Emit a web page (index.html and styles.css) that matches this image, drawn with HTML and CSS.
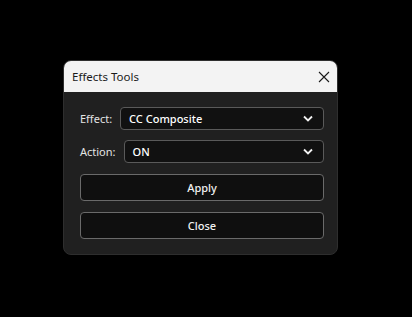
FILE: index.html
```html
<!DOCTYPE html>
<html lang="en">
<head>
    <meta charset="UTF-8">
    <meta name="viewport" content="width=device-width, initial-scale=1.0">
    <title>Effects Tools</title>
    <link rel="stylesheet" href="styles.css">
</head>
<body>
    <div class="dialog">
        <div class="titlebar">
            <span class="title">Effects Tools</span>
            <svg class="close-x" width="12" height="12" viewBox="0 0 12 12">
                <path d="M1 1 L11 11 M11 1 L1 11" stroke="#1a1a1a" stroke-width="1.1" fill="none"/>
            </svg>
        </div>
        <div class="content">
            <div class="row">
                <span class="label">Effect:</span>
                <div class="dropdown">
                    <span>CC Composite</span>
                    <svg class="chevron" width="10" height="7" viewBox="0 0 10 7">
                        <path d="M1 1.5 L5 5.5 L9 1.5" stroke="#f0f0f0" stroke-width="1.8" fill="none"/>
                    </svg>
                </div>
            </div>
            <div class="row">
                <span class="label">Action:</span>
                <div class="dropdown">
                    <span>ON</span>
                    <svg class="chevron" width="10" height="7" viewBox="0 0 10 7">
                        <path d="M1 1.5 L5 5.5 L9 1.5" stroke="#f0f0f0" stroke-width="1.8" fill="none"/>
                    </svg>
                </div>
            </div>
            <button class="btn">Apply</button>
            <button class="btn">Close</button>
        </div>
    </div>
</body>
</html>
```

FILE: styles.css
```css
* {
    box-sizing: border-box;
}
body {
    margin: 0;
    background-color: #000;
    font-family: "Noto Sans", "Open Sans", sans-serif;
    font-size: 11px;
}
.dialog {
    width: 275px;
    margin: 60px 0 0 63px;
    background: #202020;
    border: 1px solid #2e2e2e;
    border-radius: 8px;
    overflow: hidden;
}
.titlebar {
    height: 31px;
    background: #f3f3f3;
    display: flex;
    align-items: center;
    justify-content: space-between;
    padding: 0 7px 0 8px;
}
.title {
    color: #1a1a1a;
    font-size: 11.5px;
}
.content {
    padding: 15px 13px 15px 16px;
    display: flex;
    flex-direction: column;
}
.row {
    display: flex;
    align-items: center;
    gap: 8px;
    margin-bottom: 10px;
}
.row + .row {
    margin-bottom: 11px;
}
.label {
    color: #e4e4e4;
}
.dropdown {
    flex: 1;
    height: 23px;
    background: #111;
    border: 1px solid #5a5a5a;
    border-radius: 4px;
    display: flex;
    align-items: center;
    justify-content: space-between;
    padding: 0 10px 0 8px;
    color: #fff;
    font-weight: 500;
}
.btn {
    height: 27px;
    background: #0f0f0f;
    border: 1px solid #6a6a6a;
    border-radius: 4px;
    color: #f2f2f2;
    font-family: inherit;
    font-size: 11px;
    font-weight: 500;
    margin-bottom: 11px;
}
.btn:last-child {
    margin-bottom: 0;
}
```
